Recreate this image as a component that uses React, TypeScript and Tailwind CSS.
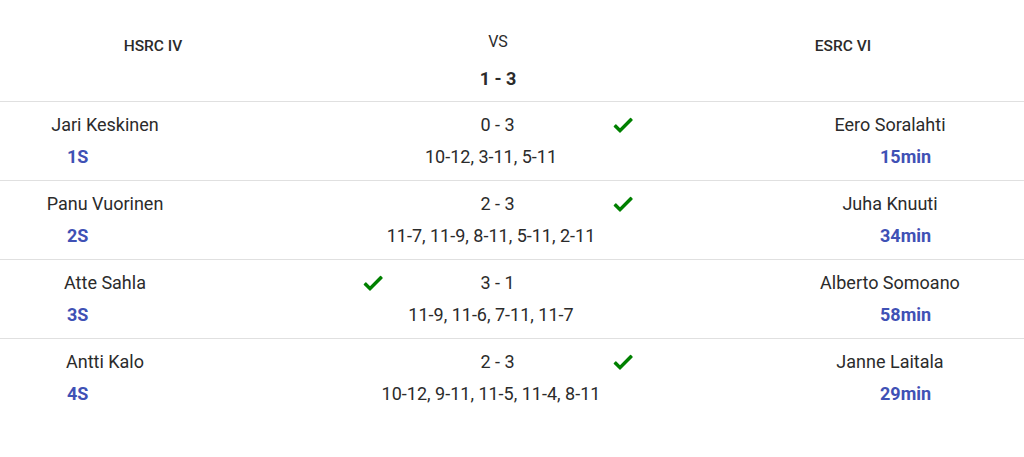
const matches = [
  { home: 'Jari Keskinen', code: '1S', score: '0 - 3', sets: '10-12, 3-11, 5-11', away: 'Eero Soralahti', time: '15min', winner: 'away' },
  { home: 'Panu Vuorinen', code: '2S', score: '2 - 3', sets: '11-7, 11-9, 8-11, 5-11, 2-11', away: 'Juha Knuuti', time: '34min', winner: 'away' },
  { home: 'Atte Sahla', code: '3S', score: '3 - 1', sets: '11-9, 11-6, 7-11, 11-7', away: 'Alberto Somoano', time: '58min', winner: 'home' },
  { home: 'Antti Kalo', code: '4S', score: '2 - 3', sets: '10-12, 9-11, 11-5, 11-4, 8-11', away: 'Janne Laitala', time: '29min', winner: 'away' },
];

function Check({ show }: { show: boolean }) {
  return (
    <div className="w-6 h-6 flex items-center justify-center">
      {show && (
        <svg viewBox="0 0 24 24" width="24" height="24" fill="#008000" stroke="#008000" strokeWidth="1.5" strokeLinejoin="round">
          <path d="M9 16.17 4.83 12l-1.42 1.41L9 19 21 7l-1.41-1.41z" />
        </svg>
      )}
    </div>
  );
}

export default function App() {
  return (
    <div className="w-[1024px] h-[457px] bg-white text-[#2b2b2b]" style={{ fontFamily: 'Roboto, "Noto Sans", sans-serif' }}>
      {/* Header */}
      <div className="flex h-[102px] border-b border-[#e0e0e0]">
        <div className="w-[306px] pt-9 text-center text-[15.5px] leading-5 font-medium">HSRC IV</div>
        <div className="w-[384px] pt-8 flex flex-col items-center">
          <div className="text-base leading-5">VS</div>
          <div className="mt-[15px] text-lg leading-6 font-bold">1 - 3</div>
        </div>
        <div className="w-[306px] pt-9 text-center text-[15.5px] leading-5 font-medium">ESRC VI</div>
      </div>

      {matches.map((m, i) => (
        <div key={m.code} className={`flex h-[79px] pt-[11px] ${i < matches.length - 1 ? 'border-b border-[#e0e0e0]' : ''}`}>
          <div className="w-[210px] flex flex-col gap-2">
            <div className="text-lg leading-6 text-center">{m.home}</div>
            <div className="text-lg leading-6 font-bold text-[#3f51b5] pl-[67px]">{m.code}</div>
          </div>
          <div className="w-[575px] flex flex-col items-center gap-2">
            <div className="flex items-center">
              <Check show={m.winner === 'home'} />
              <div className="w-[226px] text-center text-lg leading-6">{m.score}</div>
              <Check show={m.winner === 'away'} />
            </div>
            <div className="text-lg leading-6 text-center pr-[13px]">{m.sets}</div>
          </div>
          <div className="w-[210px] flex flex-col gap-2">
            <div className="text-lg leading-6 text-center">{m.away}</div>
            <div className="text-lg leading-6 font-bold text-[#3f51b5] pl-[95px]">{m.time}</div>
          </div>
        </div>
      ))}
    </div>
  );
}
